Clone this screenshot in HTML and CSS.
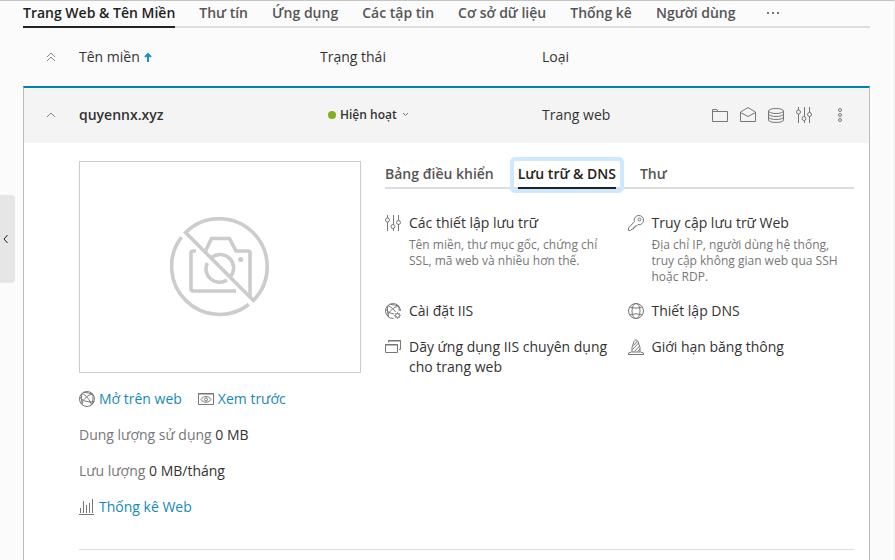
FILE: index.html
```html
<!DOCTYPE html>
<html lang="vi">
<head>
<meta charset="utf-8">
<meta name="viewport" content="width=device-width, initial-scale=1">
<title>Trang Web &amp; Tên Miền</title>
<link rel="stylesheet" href="styles.css">
</head>
<body>
<svg class="sprite" aria-hidden="true">
  <symbol id="i-sliders" viewBox="0 0 16 16"><path d="M2.500 0v3M2.500 7v9M8.500 0v9.500M8.500 13.500v2.500M13.500 0v5.500M13.500 9.500v6.500"/><circle cx="2.500" cy="5" r="2"/><circle cx="8" cy="11.500" r="2"/><circle cx="13.500" cy="7.500" r="2"/></symbol>
  <symbol id="i-globe" viewBox="0 0 16 16"><circle cx="8" cy="8" r="7.500"/><path d="M3 2.500C7 4 11 9 12.500 14M13.500 3C9 4 4 8 2.500 13M5 1.200C8 1.500 11 2.500 13.500 3M.8 6C2 9 8 12 15 10.500M13.500 3c1 3 .5 7-1 11M3 2.500c-.8 3-.8 7 .5 11"/></symbol>
  <symbol id="i-globe-gear" viewBox="0 0 16 16"><path d="M8.500 15.500A7.500 7.500 0 1 1 15.500 8M3 2.500C6 4 9 6.500 10.500 9M13.500 3C9 4 4 8 2.500 13M5 1.200C8 1.500 11 2.500 13.500 3M.8 6C2 8.500 5 10.500 9 11M13.500 3c.6 1.500.8 3 .6 5M3 2.500c-.8 3-.8 7 .5 11"/><circle cx="12.500" cy="12.500" r="2"/><path d="M12.500 9.300v1.200M12.500 14.500v1.200M9.300 12.500h1.200M14.500 12.500h1.200M10.300 10.300l.8.8M13.900 13.900l.8.8M14.700 10.300l-.8.8M10.300 14.700l.8-.8"/></symbol>
</svg>

<button class="drawer" type="button" aria-label="Mở bảng bên">
  <svg viewBox="0 0 6 10"><path d="M4.500 1L1 5l3.500 4"/></svg>
</button>

<main class="page">
  <nav class="tabs">
    <a class="tab active" href="#">Trang Web &amp; Tên Miền</a>
    <a class="tab" href="#">Thư tín</a>
    <a class="tab" href="#">Ứng dụng</a>
    <a class="tab" href="#">Các tập tin</a>
    <a class="tab" href="#">Cơ sở dữ liệu</a>
    <a class="tab" href="#">Thống kê</a>
    <a class="tab" href="#">Người dùng</a>
    <button class="tab more" type="button" aria-label="Thêm"><i></i><i></i><i></i></button>
  </nav>

  <table class="domains">
    <colgroup><col class="c-toggle"><col class="c-name"><col class="c-status"><col class="c-type"><col class="c-actions"></colgroup>
    <thead>
      <tr>
        <th><button class="toggle" type="button" aria-label="Thu gọn tất cả"><svg class="chevron" viewBox="0 0 10 10"><path d="M1 5l4-4 4 4M1 9l4-4 4 4"/></svg></button></th>
        <th><a class="sort" href="#">Tên miền <svg viewBox="0 0 8 9"><path d="M4 9V1M1 4l3-3 3 3"/></svg></a></th>
        <th>Trạng thái</th>
        <th>Loại</th>
        <th></th>
      </tr>
    </thead>
    <tbody>
      <tr class="summary">
        <td><button class="toggle" type="button" aria-label="Thu gọn"><svg class="chevron" viewBox="0 0 10 10"><path d="M1 7l4-4 4 4"/></svg></button></td>
        <td><a class="name" href="#">quyennx.xyz</a></td>
        <td><button class="status" type="button"><span class="dot"></span>Hiện hoạt<svg viewBox="0 0 7 5"><path d="M1 1l2.500 2.500L6 1"/></svg></button></td>
        <td>Trang web</td>
        <td>
          <div class="actions">
            <button type="button" aria-label="Tập tin"><svg class="icon" viewBox="0 0 16 16"><path d="M.5 14.500v-12h4.500l1 2h9.500v10zM.5 4.500h5.500"/></svg></button>
            <button type="button" aria-label="Thư"><svg class="icon" viewBox="0 0 16 16"><path d="M.5 14.500V5L8 .6 15.500 5v9.500zM.5 5.500L8 9.500l7.500-4"/></svg></button>
            <button type="button" aria-label="Cơ sở dữ liệu"><svg class="icon" viewBox="0 0 16 16"><ellipse cx="8" cy="4" rx="7.500" ry="2.500"/><path d="M.5 4v9c0 3.300 15 3.300 15 0V4M.5 7c0 3.300 15 3.300 15 0M.5 10c0 3.300 15 3.300 15 0"/></svg></button>
            <button type="button" aria-label="Thiết lập"><svg class="icon"><use href="#i-sliders"/></svg></button>
            <button class="menu" type="button" aria-label="Thao tác khác"><svg class="icon" viewBox="0 0 16 16"><circle cx="8" cy="3" r="1.500"/><circle cx="8" cy="8" r="1.500"/><circle cx="8" cy="13" r="1.500"/></svg></button>
          </div>
        </td>
      </tr>
      <tr class="detail">
        <td colspan="5">
          <div class="columns">
            <section class="overview">
              <div class="preview">
                <svg viewBox="0 0 100 100">
                  <g stroke-width="3.600">
                    <path d="M15.560 15.560A48 48 0 0 1 83.440 83.440zM11.500 20.200A48 48 0 0 0 78.800 87.500"/>
                    <path d="M26 34h-3a2 2 0 0 0-2 2v36a2 2 0 0 0 2 2h43M35.500 34l6-12.500h18L66 34h12a2 2 0 0 1 2 2v44"/>
                    <path d="M37.300 46A13.500 13.500 0 0 0 57 63M41.500 40.600A13.500 13.500 0 0 1 61 59"/>
                  </g>
                  <circle class="flash" cx="70.700" cy="42.500" r="2.600"/>
                </svg>
              </div>
              <p class="links">
                <a href="#"><svg class="icon"><use href="#i-globe"/></svg>Mở trên web</a>
                <a href="#"><svg class="icon" viewBox="0 0 16 16"><path d="M.5 2.500h15v11H.5zM0 3h16M3 8.500c2.500-4 7.500-4 10 0-2.500 3.700-7.500 3.700-10 0z"/><circle cx="8" cy="8.500" r="1.500"/></svg>Xem trước</a>
              </p>
              <p class="stat">Dung lượng sử dụng <b>0 MB</b></p>
              <p class="stat">Lưu lượng <b>0 MB/tháng</b></p>
              <p class="links">
                <a href="#"><svg class="icon" viewBox="0 0 16 16"><path d="M0 15.500h15M1.500 9v5M4.500 2v12M7.500 6v8M10.500 4v10M13.500 0v14"/></svg>Thống kê Web</a>
              </p>
            </section>
            <section class="panel">
              <nav class="tabs">
                <a class="tab" href="#">Bảng điều khiển</a>
                <a class="tab active focused" href="#">Lưu trữ &amp; DNS</a>
                <a class="tab" href="#">Thư</a>
              </nav>
              <div class="tools">
                <div class="tool">
                  <svg class="icon"><use href="#i-sliders"/></svg>
                  <div><a href="#">Các thiết lập lưu trữ</a><p>Tên miền, thư mục gốc, chứng chỉ SSL, mã web và nhiều hơn thế.</p></div>
                </div>
                <div class="tool">
                  <svg class="icon" viewBox="0 0 16 16"><path d="M6.500 6.500C5.500 3 8 .5 11 .5a4.500 4.500 0 0 1 4.500 4.500c0 3-2.500 5.300-5.500 4.500L8.500 11H7v1.500H5.500V14H4l-1.500 1.500H.5V13z"/><circle cx="11.500" cy="4.500" r="1.500"/></svg>
                  <div><a href="#">Truy cập lưu trữ Web</a><p>Địa chỉ IP, người dùng hệ thống, truy cập không gian web qua SSH hoặc RDP.</p></div>
                </div>
                <div class="tool">
                  <svg class="icon"><use href="#i-globe-gear"/></svg>
                  <div><a href="#">Cài đặt IIS</a></div>
                </div>
                <div class="tool">
                  <svg class="icon" viewBox="0 0 16 16"><circle cx="8" cy="8" r="7.500"/><ellipse cx="8" cy="8" rx="4" ry="7.500"/><path d="M2 4c3.500 1.500 8.500 1.500 12 0M2 12c3.500-1.500 8.500-1.500 12 0"/></svg>
                  <div><a href="#">Thiết lập DNS</a></div>
                </div>
                <div class="tool">
                  <svg class="icon" viewBox="0 0 16 16"><path d="M.5 5.500h12v8H.5zM0 6h13M3.500 3.500v-2h12v9H14M3 2h13"/></svg>
                  <div><a href="#">Dãy ứng dụng IIS chuyên dụng cho trang web</a></div>
                </div>
                <div class="tool">
                  <svg class="icon" viewBox="0 0 16 16"><path d="M.5 15.500V14l3-1h9l3 1v1.500zM4 13V8.500l2-6L8 .5l2 2 2 6V13M5.500 6.500L9.500 2M4.500 10.500l6-6.500M6.500 12.500l5-5.500M9.500 12.500L12 10"/></svg>
                  <div><a href="#">Giới hạn băng thông</a></div>
                </div>
              </div>
            </section>
          </div>
          <hr>
        </td>
      </tr>
    </tbody>
  </table>
</main>
</body>
</html>
```

FILE: styles.css
```css
* {
  box-sizing: border-box;
}

body {
  margin: 0;
  border-top: 1px solid #c4c4c4;
  border-right: 1px solid #eee;
  background: #fbfbfb;
  color: #333;
  font: 14px/20px "Open Sans", "Noto Sans", sans-serif;
}

a {
  color: inherit;
  text-decoration: none;
}

button {
  margin: 0;
  padding: 0;
  border: 0;
  background: none;
  color: inherit;
  font: inherit;
  cursor: pointer;
}

p {
  margin: 0;
}

svg {
  display: block;
  flex: none;
  fill: none;
  stroke: currentColor;
}

.sprite {
  position: absolute;
  width: 0;
  height: 0;
}

.icon {
  width: 16px;
  height: 16px;
  color: #777;
}

.drawer {
  position: fixed;
  top: 195px;
  left: 0;
  width: 15px;
  height: 88px;
  padding-left: 3px;
  border-radius: 0 4px 4px 0;
  background: #e6e6e6;
}

.drawer svg {
  width: 6px;
  height: 10px;
  color: #222;
}

.page {
  padding: 0 24px 0 23px;
}

.tabs {
  display: flex;
  gap: 24px;
  border-bottom: 2px solid #ddd;
}

.tab {
  margin-bottom: -2px;
  padding: 2px 0 3px;
  border-bottom: 2px solid transparent;
  color: #555;
  font-weight: 600;
  white-space: nowrap;
}

.tab.active {
  border-color: #222;
  color: #222;
}

.tab.focused {
  position: relative;
}

.tab.focused::after {
  content: "";
  position: absolute;
  inset: -4px -8px -6px;
  border: 4px solid #cce9ff;
  border-radius: 5px;
}

.more {
  display: flex;
  align-items: center;
  gap: 3px;
  margin-left: 8px;
}

.more i {
  width: 2px;
  height: 2px;
  background: #777;
}

.domains {
  width: 100%;
  border-spacing: 0;
  table-layout: fixed;
}

.c-toggle {
  width: 56px;
}

.c-name {
  width: 241px;
}

.c-status {
  width: 222px;
}

.c-actions {
  width: 182px;
}

th,
td {
  padding: 0;
  text-align: left;
}

th {
  height: 58px;
  font-weight: 400;
}

.toggle {
  display: block;
  margin-left: 23px;
}

.chevron {
  width: 10px;
  height: 10px;
  color: #888;
}

.sort {
  display: flex;
  align-items: center;
  gap: 4px;
}

.sort svg {
  width: 8px;
  height: 9px;
  color: #1a8fc4;
  stroke-width: 2;
}

.summary td {
  height: 57px;
  padding-bottom: 2px;
  border-top: 2px solid #0080b8;
  background: #f4f4f4;
}

.summary td:first-child {
  border-left: 1px solid #bbb;
}

.summary td:last-child {
  border-right: 1px solid #bbb;
}

.summary .toggle {
  margin-left: 22px;
}

.name {
  font-weight: 600;
}

.status {
  display: flex;
  align-items: center;
  margin-left: 8px;
  font-size: 12px;
  font-weight: 600;
}

.status svg {
  width: 7px;
  height: 5px;
  margin-left: 5px;
  color: #777;
}

.dot {
  width: 8px;
  height: 8px;
  margin-right: 4px;
  border-radius: 50%;
  background: #80b020;
}

.actions {
  display: flex;
  justify-content: flex-end;
  gap: 12px;
  padding-right: 21px;
}

.menu {
  margin-left: 8px;
}

.detail td {
  padding: 18px 15px 10px 55px;
  border: solid #bbb;
  border-width: 0 1px;
  background: #fff;
}

.columns {
  display: flex;
  gap: 24px;
}

.overview {
  flex: none;
  display: flex;
  flex-direction: column;
  gap: 16px;
  width: 282px;
}

.preview {
  display: flex;
  align-items: center;
  justify-content: center;
  height: 212px;
  border: 1px solid #ccc;
}

.preview svg {
  width: 100px;
  height: 100px;
  color: #ccc;
}

.flash {
  fill: currentColor;
  stroke: none;
}

.links {
  display: flex;
  gap: 16px;
  color: #1589b8;
}

.links a {
  display: flex;
  align-items: center;
  gap: 4px;
}

.stat {
  color: #777;
}

.stat b {
  color: #333;
  font-weight: 400;
}

.panel {
  flex: 1;
  min-width: 0;
}

.panel .tab {
  padding-top: 3px;
}

.tools {
  display: grid;
  grid-template-columns: 1fr 1fr;
  gap: 16px;
  margin-top: 24px;
}

.tool {
  display: flex;
  gap: 8px;
}

.tool .icon {
  margin-top: 2px;
}

.tool p {
  margin-top: 4px;
  color: #777;
  font-size: 12px;
  line-height: 16px;
}

hr {
  height: 1px;
  margin: 32px 0 0;
  border: 0;
  background: #ddd;
}
```
